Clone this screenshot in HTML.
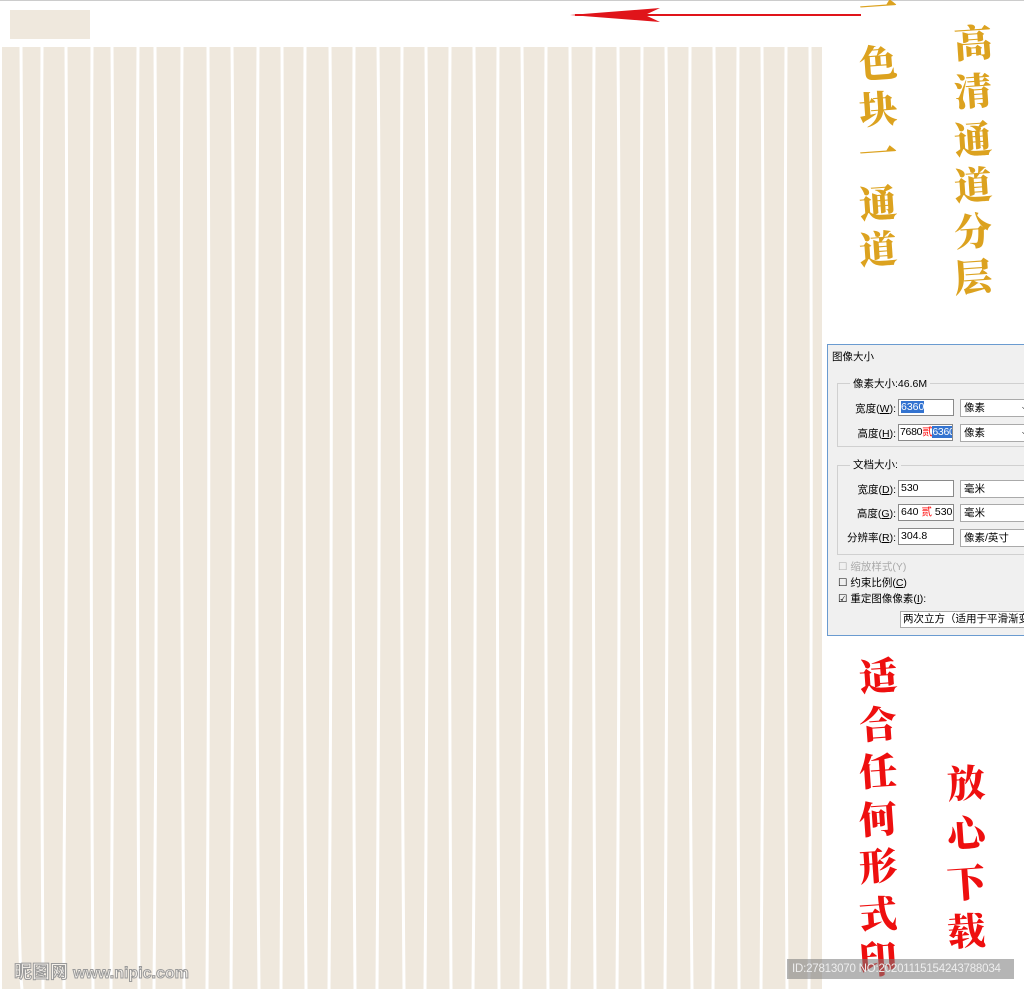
<!DOCTYPE html>
<html><head><meta charset="utf-8"><style>
body{margin:0;width:1024px;height:989px;position:relative;overflow:hidden;background:#fff;font-family:"Liberation Sans","Noto Sans CJK SC",sans-serif}
.c{position:absolute;font-family:"Noto Serif CJK SC","WenQuanYi Zen Hei",serif;font-weight:900;font-size:38px;line-height:1;transform:translateX(-50%) rotate(-4deg)}
.g{color:#dca21f}.r{color:#ee0f0f}
.dlg{position:absolute;left:827px;top:344px;width:200px;height:290px;border:1px solid #6a9bd0;background:#f0f0f0;font-size:10.5px;color:#000;white-space:nowrap}
.dlg .t{position:absolute;left:4px;top:4px}
.box{position:absolute;border:1px solid #d0d0d0}
.in{position:absolute;background:#fff;border:1px solid #8a8a8a;height:15px;font-size:10.5px;line-height:15px;padding-left:2px;overflow:hidden;white-space:nowrap}
.sel{position:absolute;background:#fff;border:1px solid #aaa;height:16px;line-height:16px;padding-left:3px;width:70px}
.lb{position:absolute;text-align:right;width:60px}
.hl{background:#3373d0;color:#fff}
</style></head><body>
<div style="position:absolute;left:0;top:0;width:1024px;height:1px;background:#ccc"></div>
<div style="position:absolute;left:10px;top:10px;width:80px;height:29px;background:#efe8dd"></div>
<svg style="position:absolute;left:2px;top:47px" width="820" height="942" viewBox="0 0 820 942">
<rect width="820" height="942" fill="#efe8dd"/>
<g stroke="#fff" stroke-width="3" fill="none">
<path d="M19 0 Q21 300 18 600 T20 942"/><path d="M40 0 Q38 400 41 942"/><path d="M64 0 Q66 350 63 700 T65 942"/><path d="M90 0 Q88 500 91 942"/><path d="M110 0 Q113 400 109 942"/><path d="M136 0 Q134 300 137 942"/><path d="M153 0 Q156 500 152 942"/><path d="M180 0 Q178 350 182 942"/><path d="M206 0 Q208 450 205 942"/><path d="M230 0 Q233 300 229 942"/><path d="M256 0 Q253 500 257 942"/><path d="M280 0 Q282 400 279 942"/><path d="M303 0 Q301 450 304 942"/><path d="M328 0 Q331 350 327 942"/><path d="M352 0 Q350 500 353 942"/><path d="M376 0 Q379 300 375 942"/><path d="M400 0 Q398 450 402 942"/><path d="M424 0 Q427 400 423 942"/><path d="M448 0 Q446 350 449 942"/><path d="M472 0 Q475 500 471 942"/><path d="M496 0 Q494 400 497 942"/><path d="M520 0 Q523 300 519 942"/><path d="M544 0 Q542 450 546 942"/><path d="M568 0 Q571 500 567 942"/><path d="M592 0 Q590 350 593 942"/><path d="M616 0 Q619 400 615 942"/><path d="M640 0 Q638 450 641 942"/><path d="M664 0 Q667 300 663 942"/><path d="M688 0 Q686 500 690 942"/><path d="M712 0 Q715 400 711 942"/><path d="M736 0 Q734 350 737 942"/><path d="M760 0 Q763 450 759 942"/><path d="M784 0 Q782 400 785 942"/><path d="M808 0 Q811 500 807 942"/>
</g></svg>
<svg style="position:absolute;left:565px;top:5px" width="300" height="22"><line x1="10" y1="10" x2="296" y2="10" stroke="#e0141a" stroke-width="2"/><path d="M5 10 L95 3 L80 10 L95 17 Z" fill="#e0141a"/></svg>
<div class="c g" style="left:878px;top:-14px">一</div>
<div class="c g" style="left:878px;top:42px">色</div>
<div class="c g" style="left:878px;top:88px">块</div>
<div class="c g" style="left:878px;top:132px">一</div>
<div class="c g" style="left:878px;top:182px">通</div>
<div class="c g" style="left:878px;top:228px">道</div>
<div class="c g" style="left:973px;top:22px">高</div>
<div class="c g" style="left:973px;top:70px">清</div>
<div class="c g" style="left:973px;top:118px">通</div>
<div class="c g" style="left:973px;top:164px">道</div>
<div class="c g" style="left:973px;top:210px">分</div>
<div class="c g" style="left:973px;top:256px">层</div>
<div class="dlg"><div class="t">图像大小</div>
<div class="box" style="left:9px;top:38px;width:195px;height:62px"></div>
<div style="position:absolute;left:22px;top:31px;background:#f0f0f0;padding:0 3px">像素大小:46.6M</div>
<div class="lb" style="left:8px;top:56px">宽度(<u>W</u>):</div><div class="in" style="left:70px;top:54px;width:52px"><span class="hl">6360</span></div><div class="sel" style="left:132px;top:54px">像素 <span style="float:right;margin-right:4px">⌵</span></div>
<div class="lb" style="left:8px;top:81px">高度(<u>H</u>):</div><div class="in" style="left:70px;top:79px;width:52px;padding-left:1px;letter-spacing:-0.3px">7680<span style="color:red">贰</span><span class="hl">6360</span></div><div class="sel" style="left:132px;top:79px">像素 <span style="float:right;margin-right:4px">⌵</span></div>
<div class="box" style="left:9px;top:120px;width:195px;height:88px"></div>
<div style="position:absolute;left:22px;top:112px;background:#f0f0f0;padding:0 3px">文档大小:</div>
<div class="lb" style="left:8px;top:137px">宽度(<u>D</u>):</div><div class="in" style="left:70px;top:135px;width:52px">530</div><div class="sel" style="left:132px;top:135px">毫米</div>
<div class="lb" style="left:8px;top:161px">高度(<u>G</u>):</div><div class="in" style="left:70px;top:159px;width:52px">640 <span style="color:red">贰</span> 530</div><div class="sel" style="left:132px;top:159px">毫米</div>
<div class="lb" style="left:8px;top:185px">分辨率(<u>R</u>):</div><div class="in" style="left:70px;top:183px;width:52px">304.8</div><div class="sel" style="left:132px;top:184px">像素/英寸</div>
<div style="position:absolute;left:10px;top:214px;color:#aaa">☐ 缩放样式(Y)</div>
<div style="position:absolute;left:10px;top:230px">☐ 约束比例(<u>C</u>)</div>
<div style="position:absolute;left:10px;top:246px">☑ 重定图像像素(<u>I</u>):</div>
<div class="in" style="left:72px;top:266px;width:130px;border-color:#aaa">两次立方（适用于平滑渐变</div>
</div>
<div class="c r" style="left:878px;top:655px">适</div>
<div class="c r" style="left:878px;top:703px">合</div>
<div class="c r" style="left:878px;top:750px">任</div>
<div class="c r" style="left:878px;top:798px">何</div>
<div class="c r" style="left:878px;top:845px">形</div>
<div class="c r" style="left:878px;top:893px">式</div>
<div class="c r" style="left:878px;top:938px">印</div>
<div class="c r" style="left:966px;top:762px">放</div>
<div class="c r" style="left:966px;top:812px">心</div>
<div class="c r" style="left:966px;top:862px">下</div>
<div class="c r" style="left:966px;top:910px">载</div>
<div style="position:absolute;left:787px;top:959px;width:227px;height:20px;background:rgba(120,120,120,.55);color:#eee;font-size:11.5px;line-height:20px;padding-left:5px;box-sizing:border-box;white-space:nowrap;overflow:hidden;letter-spacing:-0.2px">ID:27813070 NO:20201115154243788034</div>
<div style="position:absolute;left:14px;top:958px;font-size:18px;font-weight:bold;color:#f6f2ec;-webkit-text-stroke:1px #9a9a9a;white-space:nowrap">昵图网 <span style="font-size:16px">www.nipic.com</span></div>
</body></html>
